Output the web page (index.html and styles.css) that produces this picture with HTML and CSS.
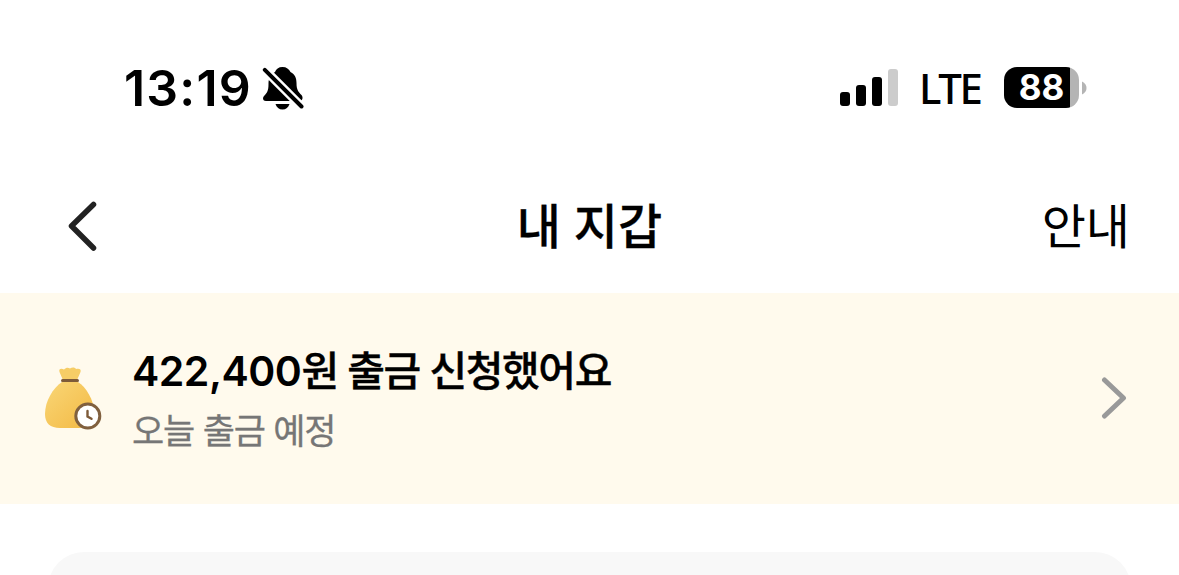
FILE: index.html
```html
<!DOCTYPE html>
<html lang="ko">
<head>
    <meta charset="UTF-8">
    <meta name="viewport" content="width=device-width, initial-scale=1.0">
    <title>내 지갑</title>
    <link rel="stylesheet" href="styles.css">
</head>
<body>
    <div class="status-bar">
        <span class="time">13:19</span>
        <svg class="bell" width="42" height="46" viewBox="0 0 42 46">
            <path d="M20.500 2C24.500 2 27 4 28.500 7C33 9.500 34.500 13 34.500 18C34.500 25 36.500 27 39.500 30C41.500 32.500 40.500 36 37.500 36H4C0.500 36 0.500 32.500 2 31C5 28 6.500 26 6.500 19C6.500 13 8.500 9.500 13 7C14 4 16.500 2 20.500 2Z"/>
            <path d="M13.500 39H27.500C26.500 42.500 24 44.500 20.500 44.500C17 44.500 14.500 42.500 13.500 39Z"/>
            <path class="bell-gap" d="M-1 1L42 44"/>
            <path class="bell-slash" d="M2.800 4.800L39.500 41.500"/>
        </svg>
        <svg class="signal" width="58" height="38" viewBox="0 0 58 38">
            <rect x="0" y="23" width="10" height="14" rx="3"/>
            <rect x="16" y="16" width="10" height="21" rx="3"/>
            <rect x="32" y="8" width="10" height="29" rx="3"/>
            <rect class="off" x="48" y="0" width="10" height="37" rx="3"/>
        </svg>
        <span class="network">LTE</span>
        <div class="battery"><span>88</span></div>
        <svg class="battery-cap" width="5" height="14" viewBox="0 0 5 14">
            <path d="M0 0.500C6 3 6 11 0 13.500Z"/>
        </svg>
    </div>

    <header class="nav">
        <svg class="back" width="30" height="50" viewBox="0 0 30 50">
            <path d="M25.500 3.500L3.500 25L25.500 47"/>
        </svg>
        <h1>내 지갑</h1>
        <span class="guide">안내</span>
    </header>

    <section class="banner">
        <svg class="money" width="60" height="66" viewBox="0 0 60 66">
            <defs>
                <linearGradient id="bag" x1="0" y1="0" x2="1" y2="1">
                    <stop offset="0" stop-color="#f9d676"/>
                    <stop offset="1" stop-color="#f3b944"/>
                </linearGradient>
            </defs>
            <path fill="url(#bag)" d="M18 15H34C42 20 50 33 50 45C50 57 44 61 35 61H16C6 61 1 56 1 47C1 34 9 21 18 15Z"/>
            <path fill="#f6cd66" d="M18.500 12L15.500 5C14.500 2 17 1 20 2.500C22 0.500 24 0 26 1.500C28 0 31 0 32 2C35 1 37.500 2 36.500 5L33.500 12Z"/>
            <path class="tie" d="M18.500 13.500H33.500"/>
            <circle class="clock" cx="43.800" cy="49" r="12"/>
            <path class="hands" d="M43.500 44V49.500L47.500 51.800"/>
        </svg>
        <div class="banner-text">
            <strong><span class="amount">422,400</span>원 출금 신청했어요</strong>
            <p>오늘 출금 예정</p>
        </div>
        <svg class="more" width="26" height="42" viewBox="0 0 26 42">
            <path d="M3.500 3L22.500 21L3.500 39"/>
        </svg>
    </section>

    <main class="content">
        <div class="card"></div>
    </main>
</body>
</html>
```

FILE: styles.css
```css
* {
    box-sizing: border-box;
}
body {
    display: flex;
    flex-direction: column;
    margin: 0;
    height: 575px;
    background: #fff;
    color: #000;
    font-family: Inter, "Noto Sans CJK KR", sans-serif;
}
svg {
    display: block;
    flex: none;
}
h1, p {
    margin: 0;
}

/* status bar */
.status-bar {
    display: flex;
    align-items: center;
    height: 176px;
    padding: 0 92px 1px 124px;
}
.time {
    width: 138px;
    font-size: 50px;
    font-weight: 600;
    letter-spacing: 1.2px;
    white-space: nowrap;
}
.bell-gap, .bell-slash {
    fill: none;
    stroke: #fff;
    stroke-width: 9;
}
.bell-slash {
    stroke: #000;
    stroke-width: 4;
    stroke-linecap: round;
}
.signal {
    margin-left: auto;
}
.signal .off {
    fill: #ccc;
}
.network {
    width: 85px;
    margin-left: 21px;
    font-family: "Noto Sans", sans-serif;
    font-size: 42px;
    font-weight: 500;
    letter-spacing: -2.4px;
}
.battery {
    width: 75px;
    height: 41px;
    border-radius: 13px;
    background: linear-gradient(to right, #000 66px, #b4b4b4 66px);
    color: #fff;
    font-size: 35px;
    font-weight: 700;
    line-height: 41px;
    text-align: center;
}
.battery-cap {
    margin-left: 3px;
    fill: #b4b4b4;
}

/* title bar */
.nav {
    display: grid;
    grid-template-columns: 1fr auto 1fr;
    align-items: center;
    height: 117px;
    padding: 0 49px 17px;
}
.back {
    margin-left: 19px;
}
.back path, .more path {
    fill: none;
    stroke: #222;
    stroke-width: 5.5;
    stroke-linecap: round;
    stroke-linejoin: round;
}
.nav h1, .guide {
    padding-top: 2px;
    font-size: 48px;
    line-height: 60px;
}
.nav h1 {
    font-weight: 500;
    -webkit-text-stroke: 0.3px #000;
}
.guide {
    justify-self: end;
}

/* withdrawal notice */
.banner {
    display: flex;
    align-items: center;
    height: 211px;
    padding: 0 52px 1px 44px;
    background: #fffaed;
}
.money {
    margin-top: 3px;
}
.tie, .hands {
    fill: none;
    stroke: #7d5a38;
    stroke-width: 3;
    stroke-linecap: round;
}
.hands {
    stroke-width: 2.4;
}
.clock {
    fill: #fff;
    stroke: #80603f;
    stroke-width: 3;
}
.banner-text {
    margin: 5px 0 0 28px;
}
.banner-text strong {
    display: block;
    font-size: 41px;
    font-weight: 500;
    letter-spacing: -1.4px;
    line-height: 60px;
    white-space: nowrap;
    -webkit-text-stroke: 0.4px #000;
}
.banner-text .amount {
    font-weight: 600;
    letter-spacing: -0.5px;
    -webkit-text-stroke: 0;
}
.banner-text p {
    color: #767676;
    font-size: 35px;
    letter-spacing: -1.2px;
    line-height: 60px;
    -webkit-text-stroke: 0.3px #767676;
}
.banner .more {
    margin-left: auto;
}
.banner .more path {
    stroke: #999;
    stroke-width: 5;
}

/* balance card, cut off by the bottom of the screen */
.content {
    flex: 1;
    min-height: 0;
    padding: 48px 48px 0;
    overflow: hidden;
}
.card {
    height: 100px;
    border-radius: 36px;
    background: #f8f8f8;
}
```
